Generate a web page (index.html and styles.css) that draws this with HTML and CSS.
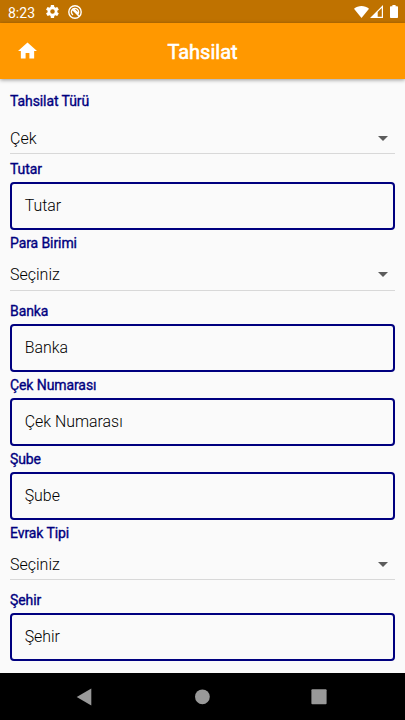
FILE: index.html
```
<!DOCTYPE html>
<html lang="tr">
<head>
<meta charset="utf-8">
<title>Tahsilat</title>
<link rel="stylesheet" href="styles.css">
</head>
<body>
<div class="status">
  <span class="time">8:23</span>
  <svg class="gear" viewBox="2 2 20 20"><path d="M19.4 13a7.500 7.500 0 0 0 0-2l2.100-1.600a.5.5 0 0 0 .1-.6l-2-3.500a.5.5 0 0 0-.6-.2l-2.500 1a7.300 7.300 0 0 0-1.700-1l-.4-2.700a.5.5 0 0 0-.5-.4h-4a.5.5 0 0 0-.5.4L9 5.100a7.700 7.700 0 0 0-1.700 1l-2.500-1a.5.5 0 0 0-.6.2l-2 3.500a.5.5 0 0 0 .1.6L4.500 11a7.900 7.900 0 0 0 0 2l-2.200 1.600a.5.5 0 0 0-.1.600l2 3.500c.1.200.4.300.6.200l2.500-1a7.300 7.300 0 0 0 1.700 1l.4 2.700c0 .2.200.4.500.4h4c.3 0 .5-.2.500-.4l.4-2.700a7.700 7.700 0 0 0 1.700-1l2.500 1c.2.100.5 0 .6-.2l2-3.500a.5.5 0 0 0-.1-.6zM12 15.500a3.500 3.500 0 1 1 0-7 3.500 3.500 0 0 1 0 7z"/></svg>
  <svg class="ring" viewBox="0 0 14 14"><circle cx="7" cy="7" r="6.200"/><path d="M9.900 9.100A3.600 3.600 0 1 0 5 10M4.500 4.500l6.700 6.700M6.200 4.500l3.500 3.500"/></svg>
  <span class="grow"></span>
  <svg class="wifi" viewBox="0 0 15 12"><path d="M0 2.800C4.200-.9 10.800-.9 15 2.800L7.500 12z"/></svg>
  <svg class="signal" viewBox="0 0 13 13"><path fill-rule="evenodd" d="M13 0v13H0zM11.800 3L7.700 7.100v4.700h4.100z"/></svg>
  <svg class="battery" viewBox="0 0 8 13"><path d="M2.400 0h3.200v1.200h1.600q.8 0 .8.800v10.200q0 .8-.8.800H.8q-.8 0-.8-.8V2q0-.8.8-.8h1.600z"/></svg>
</div>
<header class="bar">
  <svg class="home" viewBox="2 3 20 17"><path d="M10 20v-6h4v6h5v-8h3L12 3 2 12h3v8z"/></svg>
  <h1>Tahsilat</h1>
</header>
<main>
  <div class="label first">Tahsilat Türü</div>
  <div class="select compact"><span>Çek</span><i></i></div>
  <div class="label">Tutar</div>
  <div class="input">Tutar</div>
  <div class="label">Para Birimi</div>
  <div class="select"><span>Seçiniz</span><i></i></div>
  <div class="label">Banka</div>
  <div class="input">Banka</div>
  <div class="label">Çek Numarası</div>
  <div class="input">Çek Numarası</div>
  <div class="label">Şube</div>
  <div class="input">Şube</div>
  <div class="label">Evrak Tipi</div>
  <div class="select"><span>Seçiniz</span><i></i></div>
  <div class="label">Şehir</div>
  <div class="input">Şehir</div>
</main>
<nav>
  <svg viewBox="0 0 16 18"><path d="M14.300.5v17L-.3 9z"/></svg>
  <svg viewBox="0 0 16 18"><circle cx="8.400" cy="8.800" r="7.400"/></svg>
  <svg viewBox="0 0 16 18"><rect x=".4" y="1.200" width="15.200" height="15" rx="1"/></svg>
</nav>
</body>
</html>
```
FILE: styles.css
```
* { box-sizing: border-box; }
body {
  margin: 0;
  height: 720px;
  display: flex;
  flex-direction: column;
  overflow: hidden;
  background: #fafafa;
  font-family: Roboto, "Liberation Sans", sans-serif;
}
svg { display: block; fill: #fff; overflow: visible; }
.status {
  height: 23.4px;
  flex: none;
  display: flex;
  align-items: center;
  padding: 0 7px 0 8px;
  background: #bf7200;
  color: #fff;
}
.time { font-size: 14px; width: 38px; padding-top: 2px; }
.gear { width: 13px; height: 13px; }
.ring { width: 14px; height: 14px; margin-left: 8.500px; }
.ring circle, .ring path { fill: none; stroke: #fff; stroke-width: 1.400; }
.grow { flex: 1; }
.wifi { width: 15px; height: 12px; }
.signal { width: 13px; height: 13px; margin-left: 1px; }
.battery { width: 8px; height: 13px; margin-left: 7px; }
.bar {
  height: 55.2px;
  flex: none;
  display: grid;
  grid-template-columns: 37px 1fr 37px;
  align-items: center;
  background: #ff9800;
  box-shadow: 0 1px 4px rgba(0, 0, 0, .4);
}
.home { width: 19px; height: 17px; margin-left: 18px; }
h1 {
  margin: 0;
  padding-top: 2px;
  text-align: center;
  color: #fff;
  font-size: 20px;
  font-weight: 400;
  -webkit-text-stroke: .6px #fff;
}
main { flex: 1; padding: 9.400px 10px 0; }
.label {
  height: 26px;
  line-height: 26px;
  font-size: 14px;
  letter-spacing: -.09px;
  color: #00007f;
  -webkit-text-stroke: .35px #00007f;
}
.first { margin-bottom: 6px; }
.select {
  height: 34.500px;
  margin-bottom: 7px;
  display: flex;
  align-items: center;
  justify-content: space-between;
  border-bottom: 1px solid #d8d8d8;
  padding: 3px 7px 0 0;
  font-size: 16px;
  font-weight: 300;
  color: #000;
}
.compact { margin-bottom: 1.800px; }
.select i {
  border: 5px solid transparent;
  border-top-color: #5c5c5c;
  border-bottom: 0;
}
.input {
  height: 48px;
  line-height: 43px;
  padding-left: 12.700px;
  border: 2px solid #00007f;
  border-radius: 4px;
  font-size: 15.900px;
  font-weight: 300;
  color: #000;
}
nav {
  height: 47px;
  flex: none;
  display: flex;
  align-items: center;
  justify-content: space-between;
  padding: 0 78px 0 77px;
  background: #000;
}
nav svg { width: 16px; height: 18px; fill: #999; }
```
